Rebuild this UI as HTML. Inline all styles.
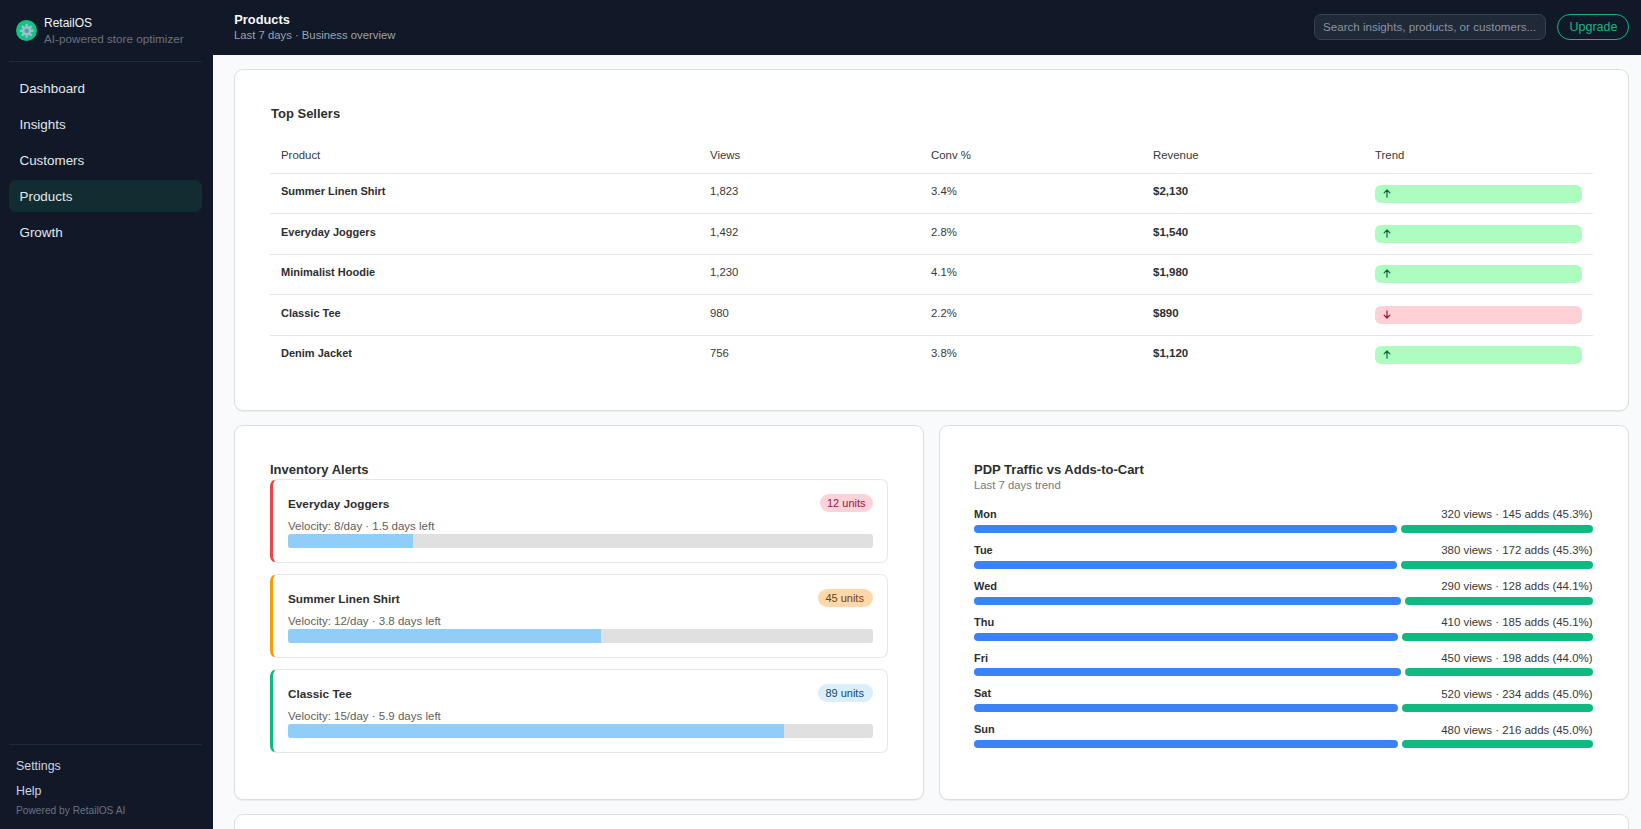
<!DOCTYPE html>
<html><head><meta charset="utf-8"><title>RetailOS - Products</title>
<style>
html,body{margin:0;padding:0;width:1641px;height:829px;overflow:hidden;background:#f9fafb;font-family:"Liberation Sans", sans-serif;}
body{position:relative;}
</style></head><body>
<div style="position:absolute;left:0px;top:0px;width:1641px;height:55px;background:#111827"></div>
<div style="position:absolute;left:0px;top:0px;width:213px;height:829px;background:#111827"></div>
<div style="position:absolute;left:213px;top:55px;width:1428px;height:774px;background:#f9fafb"></div>
<svg style="position:absolute;left:16px;top:20px" width="21" height="21" viewBox="0 0 21 21">
<circle cx="10.5" cy="10.5" r="10.5" fill="#14c286"/>
<g transform="translate(10.7 10.8)">
<path d="M-1.22 -4.54 L-1.08 -6.82 L1.08 -6.82 L1.22 -4.54 L2.35 -4.07 L4.06 -5.58 L5.58 -4.06 L4.07 -2.35 L4.54 -1.22 L6.82 -1.08 L6.82 1.08 L4.54 1.22 L4.07 2.35 L5.58 4.06 L4.06 5.58 L2.35 4.07 L1.22 4.54 L1.08 6.82 L-1.08 6.82 L-1.22 4.54 L-2.35 4.07 L-4.06 5.58 L-5.58 4.06 L-4.07 2.35 L-4.54 1.22 L-6.82 1.08 L-6.82 -1.08 L-4.54 -1.22 L-4.07 -2.35 L-5.58 -4.06 L-4.06 -5.58 L-2.35 -4.07Z" fill="#9dc0cf"/>
<circle r="2.4" fill="#6f9cad"/>
<circle r="1.4" fill="#22c08a"/>
</g>
</svg>
<div style="position:absolute;left:44px;top:16.44px;line-height:15px;font-size:12px;font-weight:400;color:#f3f4f6;white-space:nowrap;">RetailOS</div>
<div style="position:absolute;left:44px;top:31.35px;line-height:15px;font-size:11.7px;font-weight:400;color:#6b7280;white-space:nowrap;">AI-powered store optimizer</div>
<div style="position:absolute;left:9px;top:61px;width:193px;height:1px;background:#1f2937"></div>
<div style="position:absolute;left:19.5px;top:79.86px;line-height:17px;font-size:13.4px;font-weight:400;color:#e5e7eb;white-space:nowrap;">Dashboard</div>
<div style="position:absolute;left:19.5px;top:115.86px;line-height:17px;font-size:13.4px;font-weight:400;color:#e5e7eb;white-space:nowrap;">Insights</div>
<div style="position:absolute;left:19.5px;top:151.86px;line-height:17px;font-size:13.4px;font-weight:400;color:#e5e7eb;white-space:nowrap;">Customers</div>
<div style="position:absolute;left:9px;top:180px;width:193px;height:32px;background:#122d31;border-radius:7px"></div>
<div style="position:absolute;left:19.5px;top:187.86px;line-height:17px;font-size:13.4px;font-weight:400;color:#e5e7eb;white-space:nowrap;">Products</div>
<div style="position:absolute;left:19.5px;top:223.86px;line-height:17px;font-size:13.4px;font-weight:400;color:#e5e7eb;white-space:nowrap;">Growth</div>
<div style="position:absolute;left:9px;top:744px;width:193px;height:1px;background:#1f2937"></div>
<div style="position:absolute;left:16px;top:758.00px;line-height:16px;font-size:12.4px;font-weight:400;color:#cbd5e1;white-space:nowrap;">Settings</div>
<div style="position:absolute;left:16px;top:783.00px;line-height:16px;font-size:12.4px;font-weight:400;color:#cbd5e1;white-space:nowrap;">Help</div>
<div style="position:absolute;left:16px;top:803.97px;line-height:13px;font-size:10.2px;font-weight:400;color:#6b7280;white-space:nowrap;">Powered by RetailOS AI</div>
<div style="position:absolute;left:234.3px;top:11.66px;line-height:16px;font-size:12.8px;font-weight:700;color:#f9fafb;white-space:nowrap;">Products</div>
<div style="position:absolute;left:234px;top:27.78px;line-height:14px;font-size:11.3px;font-weight:400;color:#9ca3af;white-space:nowrap;">Last 7 days · Business overview</div>
<div style="position:absolute;left:1314px;top:14px;width:232px;height:26px;box-sizing:border-box;background:#1f2937;border:1px solid #374151;border-radius:7px"></div>
<div style="position:absolute;left:1323px;top:19.78px;line-height:14px;font-size:11.6px;font-weight:400;color:#8b93a1;white-space:nowrap;">Search insights, products, or customers...</div>
<div style="position:absolute;left:1557px;top:14px;width:72px;height:26px;box-sizing:border-box;border:1.2px solid #10b981;border-radius:13px"></div>
<div style="position:absolute;left:1569.5px;top:18.77px;line-height:16px;font-size:12.5px;font-weight:400;color:#10b981;white-space:nowrap;">Upgrade</div>
<div style="position:absolute;left:234px;top:69px;width:1395px;height:341.5px;box-sizing:border-box;background:#fff;border:1px solid #dedede;border-radius:9px;box-shadow:0 1px 1px rgba(0,0,0,0.06)"></div>
<div style="position:absolute;left:234px;top:425px;width:690px;height:374.5px;box-sizing:border-box;background:#fff;border:1px solid #dedede;border-radius:9px;box-shadow:0 1px 1px rgba(0,0,0,0.06)"></div>
<div style="position:absolute;left:939px;top:425px;width:690px;height:374.5px;box-sizing:border-box;background:#fff;border:1px solid #dedede;border-radius:9px;box-shadow:0 1px 1px rgba(0,0,0,0.06)"></div>
<div style="position:absolute;left:234px;top:814px;width:1395px;height:15px;box-sizing:border-box;background:#fff;border:1px solid #dedede;border-radius:9px;box-shadow:0 1px 1px rgba(0,0,0,0.06);border-bottom:none;border-bottom-left-radius:0;border-bottom-right-radius:0;box-shadow:none"></div>
<div style="position:absolute;left:271px;top:105.70px;line-height:16px;font-size:13px;font-weight:700;color:#2e2e2e;white-space:nowrap;">Top Sellers</div>
<div style="position:absolute;left:281px;top:148.05px;line-height:14px;font-size:11.4px;font-weight:400;color:#383838;white-space:nowrap;">Product</div>
<div style="position:absolute;left:710px;top:148.05px;line-height:14px;font-size:11.4px;font-weight:400;color:#383838;white-space:nowrap;">Views</div>
<div style="position:absolute;left:931px;top:148.05px;line-height:14px;font-size:11.4px;font-weight:400;color:#383838;white-space:nowrap;">Conv %</div>
<div style="position:absolute;left:1153px;top:148.05px;line-height:14px;font-size:11.4px;font-weight:400;color:#383838;white-space:nowrap;">Revenue</div>
<div style="position:absolute;left:1375px;top:148.05px;line-height:14px;font-size:11.4px;font-weight:400;color:#383838;white-space:nowrap;">Trend</div>
<div style="position:absolute;left:270px;top:173px;width:1323px;height:1px;background:#e5e7eb"></div>
<div style="position:absolute;left:281px;top:184.09px;line-height:14px;font-size:11px;font-weight:700;color:#2e2e2e;white-space:nowrap;">Summer Linen Shirt</div>
<div style="position:absolute;left:710px;top:183.98px;line-height:14px;font-size:11.3px;font-weight:400;color:#383838;white-space:nowrap;">1,823</div>
<div style="position:absolute;left:931px;top:183.98px;line-height:14px;font-size:11.3px;font-weight:400;color:#383838;white-space:nowrap;">3.4%</div>
<div style="position:absolute;left:1153px;top:183.92px;line-height:14px;font-size:11.5px;font-weight:700;color:#2e2e2e;white-space:nowrap;">$2,130</div>
<div style="position:absolute;left:1375px;top:185px;width:207px;height:18px;background:#adfcc0;border-radius:6px"></div>
<svg style="position:absolute;left:1382.5px;top:188.6px" width="8" height="9" viewBox="0 0 8 9"><path d="M4 8.2V1 M1.1 3.9 L4 1 L6.9 3.9" fill="none" stroke="#14603f" stroke-width="1.2" stroke-linecap="round" stroke-linejoin="round"/></svg>
<div style="position:absolute;left:270px;top:213px;width:1323px;height:1px;background:#e5e7eb"></div>
<div style="position:absolute;left:281px;top:224.89px;line-height:14px;font-size:11px;font-weight:700;color:#2e2e2e;white-space:nowrap;">Everyday Joggers</div>
<div style="position:absolute;left:710px;top:224.78px;line-height:14px;font-size:11.3px;font-weight:400;color:#383838;white-space:nowrap;">1,492</div>
<div style="position:absolute;left:931px;top:224.78px;line-height:14px;font-size:11.3px;font-weight:400;color:#383838;white-space:nowrap;">2.8%</div>
<div style="position:absolute;left:1153px;top:224.72px;line-height:14px;font-size:11.5px;font-weight:700;color:#2e2e2e;white-space:nowrap;">$1,540</div>
<div style="position:absolute;left:1375px;top:225px;width:207px;height:18px;background:#adfcc0;border-radius:6px"></div>
<svg style="position:absolute;left:1382.5px;top:228.6px" width="8" height="9" viewBox="0 0 8 9"><path d="M4 8.2V1 M1.1 3.9 L4 1 L6.9 3.9" fill="none" stroke="#14603f" stroke-width="1.2" stroke-linecap="round" stroke-linejoin="round"/></svg>
<div style="position:absolute;left:270px;top:254px;width:1323px;height:1px;background:#e5e7eb"></div>
<div style="position:absolute;left:281px;top:265.09px;line-height:14px;font-size:11px;font-weight:700;color:#2e2e2e;white-space:nowrap;">Minimalist Hoodie</div>
<div style="position:absolute;left:710px;top:264.98px;line-height:14px;font-size:11.3px;font-weight:400;color:#383838;white-space:nowrap;">1,230</div>
<div style="position:absolute;left:931px;top:264.98px;line-height:14px;font-size:11.3px;font-weight:400;color:#383838;white-space:nowrap;">4.1%</div>
<div style="position:absolute;left:1153px;top:264.92px;line-height:14px;font-size:11.5px;font-weight:700;color:#2e2e2e;white-space:nowrap;">$1,980</div>
<div style="position:absolute;left:1375px;top:265px;width:207px;height:18px;background:#adfcc0;border-radius:6px"></div>
<svg style="position:absolute;left:1382.5px;top:268.6px" width="8" height="9" viewBox="0 0 8 9"><path d="M4 8.2V1 M1.1 3.9 L4 1 L6.9 3.9" fill="none" stroke="#14603f" stroke-width="1.2" stroke-linecap="round" stroke-linejoin="round"/></svg>
<div style="position:absolute;left:270px;top:294px;width:1323px;height:1px;background:#e5e7eb"></div>
<div style="position:absolute;left:281px;top:305.79px;line-height:14px;font-size:11px;font-weight:700;color:#2e2e2e;white-space:nowrap;">Classic Tee</div>
<div style="position:absolute;left:710px;top:305.68px;line-height:14px;font-size:11.3px;font-weight:400;color:#383838;white-space:nowrap;">980</div>
<div style="position:absolute;left:931px;top:305.68px;line-height:14px;font-size:11.3px;font-weight:400;color:#383838;white-space:nowrap;">2.2%</div>
<div style="position:absolute;left:1153px;top:305.62px;line-height:14px;font-size:11.5px;font-weight:700;color:#2e2e2e;white-space:nowrap;">$890</div>
<div style="position:absolute;left:1375px;top:306px;width:207px;height:18px;background:#fed1d7;border-radius:6px"></div>
<svg style="position:absolute;left:1382.5px;top:309.6px" width="8" height="9" viewBox="0 0 8 9"><path d="M4 0.8V8 M1.1 5.1 L4 8 L6.9 5.1" fill="none" stroke="#9f1239" stroke-width="1.2" stroke-linecap="round" stroke-linejoin="round"/></svg>
<div style="position:absolute;left:270px;top:335px;width:1323px;height:1px;background:#e5e7eb"></div>
<div style="position:absolute;left:281px;top:346.29px;line-height:14px;font-size:11px;font-weight:700;color:#2e2e2e;white-space:nowrap;">Denim Jacket</div>
<div style="position:absolute;left:710px;top:346.18px;line-height:14px;font-size:11.3px;font-weight:400;color:#383838;white-space:nowrap;">756</div>
<div style="position:absolute;left:931px;top:346.18px;line-height:14px;font-size:11.3px;font-weight:400;color:#383838;white-space:nowrap;">3.8%</div>
<div style="position:absolute;left:1153px;top:346.12px;line-height:14px;font-size:11.5px;font-weight:700;color:#2e2e2e;white-space:nowrap;">$1,120</div>
<div style="position:absolute;left:1375px;top:346px;width:207px;height:18px;background:#adfcc0;border-radius:6px"></div>
<svg style="position:absolute;left:1382.5px;top:349.6px" width="8" height="9" viewBox="0 0 8 9"><path d="M4 8.2V1 M1.1 3.9 L4 1 L6.9 3.9" fill="none" stroke="#14603f" stroke-width="1.2" stroke-linecap="round" stroke-linejoin="round"/></svg>
<div style="position:absolute;left:270px;top:461.50px;line-height:16px;font-size:13px;font-weight:700;color:#2e2e2e;white-space:nowrap;">Inventory Alerts</div>
<div style="position:absolute;left:270px;top:479px;width:618px;height:84px;box-sizing:border-box;background:#fff;border:1px solid #e5e7eb;border-left:3px solid #ef4444;border-radius:7px"></div>
<div style="position:absolute;left:288px;top:496.43px;line-height:15px;font-size:11.75px;font-weight:700;color:#2e2e2e;white-space:nowrap;">Everyday Joggers</div>
<div style="position:absolute;left:820px;top:494px;width:53px;height:18px;border-radius:9px;background:#fdd3d9"></div>
<div style="position:absolute;left:827px;top:496.09px;line-height:14px;font-size:11px;font-weight:400;color:#9f1239;white-space:nowrap;">12 units</div>
<div style="position:absolute;left:288px;top:519.22px;line-height:14px;font-size:11.5px;font-weight:400;color:#5e5e5e;white-space:nowrap;">Velocity: 8/day · 1.5 days left</div>
<div style="position:absolute;left:288px;top:534px;width:585px;height:14px;background:#e0e0e0;border-radius:3px;overflow:hidden"></div>
<div style="position:absolute;left:288px;top:534px;width:125.4px;height:14px;background:#90cdf9;border-radius:3px 0 0 3px"></div>
<div style="position:absolute;left:270px;top:574px;width:618px;height:84px;box-sizing:border-box;background:#fff;border:1px solid #e5e7eb;border-left:3px solid #f59e0b;border-radius:7px"></div>
<div style="position:absolute;left:288px;top:591.43px;line-height:15px;font-size:11.75px;font-weight:700;color:#2e2e2e;white-space:nowrap;">Summer Linen Shirt</div>
<div style="position:absolute;left:818.4px;top:589px;width:54.6px;height:18px;border-radius:9px;background:#fed7aa"></div>
<div style="position:absolute;left:825.4px;top:591.09px;line-height:14px;font-size:11px;font-weight:400;color:#713f12;white-space:nowrap;">45 units</div>
<div style="position:absolute;left:288px;top:614.22px;line-height:14px;font-size:11.5px;font-weight:400;color:#5e5e5e;white-space:nowrap;">Velocity: 12/day · 3.8 days left</div>
<div style="position:absolute;left:288px;top:629px;width:585px;height:14px;background:#e0e0e0;border-radius:3px;overflow:hidden"></div>
<div style="position:absolute;left:288px;top:629px;width:313.4px;height:14px;background:#90cdf9;border-radius:3px 0 0 3px"></div>
<div style="position:absolute;left:270px;top:669px;width:618px;height:84px;box-sizing:border-box;background:#fff;border:1px solid #e5e7eb;border-left:3px solid #10b981;border-radius:7px"></div>
<div style="position:absolute;left:288px;top:686.43px;line-height:15px;font-size:11.75px;font-weight:700;color:#2e2e2e;white-space:nowrap;">Classic Tee</div>
<div style="position:absolute;left:818.4px;top:684px;width:54.6px;height:18px;border-radius:9px;background:#daeefc"></div>
<div style="position:absolute;left:825.4px;top:686.09px;line-height:14px;font-size:11px;font-weight:400;color:#0c4a6e;white-space:nowrap;">89 units</div>
<div style="position:absolute;left:288px;top:709.22px;line-height:14px;font-size:11.5px;font-weight:400;color:#5e5e5e;white-space:nowrap;">Velocity: 15/day · 5.9 days left</div>
<div style="position:absolute;left:288px;top:724px;width:585px;height:14px;background:#e0e0e0;border-radius:3px;overflow:hidden"></div>
<div style="position:absolute;left:288px;top:724px;width:495.9px;height:14px;background:#90cdf9;border-radius:3px 0 0 3px"></div>
<div style="position:absolute;left:974px;top:461.50px;line-height:16px;font-size:13px;font-weight:700;color:#2e2e2e;white-space:nowrap;">PDP Traffic vs Adds-to-Cart</div>
<div style="position:absolute;left:974px;top:477.98px;line-height:14px;font-size:11.3px;font-weight:400;color:#777777;white-space:nowrap;">Last 7 days trend</div>
<div style="position:absolute;left:974px;top:507.19px;line-height:14px;font-size:11px;font-weight:700;color:#2e2e2e;white-space:nowrap;">Mon</div>
<div style="position:absolute;left:1300px;width:292.5px;text-align:right;top:507.43px;line-height:14px;font-size:11.45px;color:#383838;white-space:nowrap">320 views · 145 adds (45.3%)</div>
<div style="position:absolute;left:974px;top:525.0px;width:423.23px;height:8px;background:#3b82f6;border-radius:4px"></div>
<div style="position:absolute;left:1401.23px;top:525.0px;width:191.77px;height:8px;background:#10b981;border-radius:4px"></div>
<div style="position:absolute;left:974px;top:543.04px;line-height:14px;font-size:11px;font-weight:700;color:#2e2e2e;white-space:nowrap;">Tue</div>
<div style="position:absolute;left:1300px;width:292.5px;text-align:right;top:543.28px;line-height:14px;font-size:11.45px;color:#383838;white-space:nowrap">380 views · 172 adds (45.3%)</div>
<div style="position:absolute;left:974px;top:560.85px;width:423.37px;height:8px;background:#3b82f6;border-radius:4px"></div>
<div style="position:absolute;left:1401.37px;top:560.85px;width:191.63px;height:8px;background:#10b981;border-radius:4px"></div>
<div style="position:absolute;left:974px;top:578.89px;line-height:14px;font-size:11px;font-weight:700;color:#2e2e2e;white-space:nowrap;">Wed</div>
<div style="position:absolute;left:1300px;width:292.5px;text-align:right;top:579.13px;line-height:14px;font-size:11.45px;color:#383838;white-space:nowrap">290 views · 128 adds (44.1%)</div>
<div style="position:absolute;left:974px;top:596.7px;width:426.67px;height:8px;background:#3b82f6;border-radius:4px"></div>
<div style="position:absolute;left:1404.67px;top:596.7px;width:188.33px;height:8px;background:#10b981;border-radius:4px"></div>
<div style="position:absolute;left:974px;top:614.74px;line-height:14px;font-size:11px;font-weight:700;color:#2e2e2e;white-space:nowrap;">Thu</div>
<div style="position:absolute;left:1300px;width:292.5px;text-align:right;top:614.98px;line-height:14px;font-size:11.45px;color:#383838;white-space:nowrap">410 views · 185 adds (45.1%)</div>
<div style="position:absolute;left:974px;top:632.55px;width:423.78px;height:8px;background:#3b82f6;border-radius:4px"></div>
<div style="position:absolute;left:1401.78px;top:632.55px;width:191.22px;height:8px;background:#10b981;border-radius:4px"></div>
<div style="position:absolute;left:974px;top:650.59px;line-height:14px;font-size:11px;font-weight:700;color:#2e2e2e;white-space:nowrap;">Fri</div>
<div style="position:absolute;left:1300px;width:292.5px;text-align:right;top:650.83px;line-height:14px;font-size:11.45px;color:#383838;white-space:nowrap">450 views · 198 adds (44.0%)</div>
<div style="position:absolute;left:974px;top:668.4px;width:427.08px;height:8px;background:#3b82f6;border-radius:4px"></div>
<div style="position:absolute;left:1405.08px;top:668.4px;width:187.92px;height:8px;background:#10b981;border-radius:4px"></div>
<div style="position:absolute;left:974px;top:686.44px;line-height:14px;font-size:11px;font-weight:700;color:#2e2e2e;white-space:nowrap;">Sat</div>
<div style="position:absolute;left:1300px;width:292.5px;text-align:right;top:686.68px;line-height:14px;font-size:11.45px;color:#383838;white-space:nowrap">520 views · 234 adds (45.0%)</div>
<div style="position:absolute;left:974px;top:704.25px;width:424.14px;height:8px;background:#3b82f6;border-radius:4px"></div>
<div style="position:absolute;left:1402.14px;top:704.25px;width:190.86px;height:8px;background:#10b981;border-radius:4px"></div>
<div style="position:absolute;left:974px;top:722.29px;line-height:14px;font-size:11px;font-weight:700;color:#2e2e2e;white-space:nowrap;">Sun</div>
<div style="position:absolute;left:1300px;width:292.5px;text-align:right;top:722.53px;line-height:14px;font-size:11.45px;color:#383838;white-space:nowrap">480 views · 216 adds (45.0%)</div>
<div style="position:absolute;left:974px;top:740.1px;width:424.14px;height:8px;background:#3b82f6;border-radius:4px"></div>
<div style="position:absolute;left:1402.14px;top:740.1px;width:190.86px;height:8px;background:#10b981;border-radius:4px"></div>
</body></html>
